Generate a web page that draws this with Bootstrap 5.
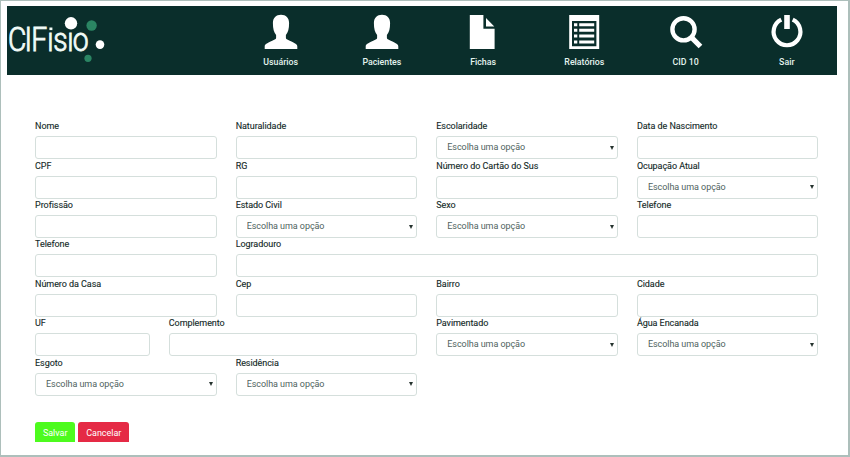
<!DOCTYPE html>
<html lang="pt-BR">
<head>
<meta charset="utf-8">
<meta name="viewport" content="width=device-width, initial-scale=1">
<title>CIFisio</title>
<link href="https://cdn.jsdelivr.net/npm/bootstrap@5.3.0/dist/css/bootstrap.min.css" rel="stylesheet">
<style>
body{font-family:Roboto,"Liberation Sans",sans-serif;font-size:9.3px;line-height:12px;color:#142a28;background:#fff}
.page-frame{height:457px;border:1px solid #adbfbb;border-width:1px 2px 2px 1px;overflow:hidden;padding:5px 11px 0 6px}
.top-bar{height:69px;background:#0a2e2b;padding:0}
.brand-logo{width:100px;height:69px}
.menu-bar{width:607.4px;margin-right:-.4px}
.menu-link{color:#e4f3ee;font-size:8.8px;font-weight:500;line-height:12px;padding:8px 0 0}
.menu-link:hover{color:#fff}
.menu-link svg{width:36px;height:36px;margin-bottom:6px;fill:#fff}
.patient-form{padding:45.3px 9px 0 18.5px}
.patient-form .row{--bs-gutter-x:19.1px;margin-right:0;margin-left:0;height:39.4px}
.patient-form .row>*{padding-left:9.55px;padding-right:9.55px}
.field-label{font-size:9px;line-height:12px;margin:0 0 4px;white-space:nowrap;letter-spacing:-.06px;-webkit-text-stroke:.12px #142a28}
.patient-form .form-control,.patient-form .form-select{height:23px;min-height:0;border:1px solid #d5dfdc;border-radius:3px;padding:0 10px;font-size:9px;line-height:21px;background-image:none;color:#4f6360;letter-spacing:-.06px}
.select-box::after{content:"";position:absolute;right:4px;top:9.5px;border:2.5px solid transparent;border-top:4.5px solid #26332f;border-bottom:0}
.form-buttons{height:20px;overflow:hidden;margin:25.7px 0 0 9.55px;gap:3px}
.form-buttons .btn{height:24px;border:0;border-radius:3px;font-size:9px;line-height:12px;color:#fff;padding:5px 7.9px 7px;letter-spacing:-.03px}
.save-btn,.save-btn:hover{background:#4dfb1e}
.cancel-btn,.cancel-btn:hover{background:#e52a45}
</style>
<script src="https://cdn.jsdelivr.net/npm/bootstrap@5.3.0/dist/js/bootstrap.bundle.min.js"></script>
</head>
<body>
<div class="page-frame">
  <nav class="top-bar navbar d-flex flex-nowrap justify-content-between align-items-start">
    <a href="#" class="d-block" aria-label="CIFisio">
      <svg class="brand-logo d-block" viewBox="0 0 100 69">
        <text transform="scale(.87 1)" x="1.2 20 27.8 46.2 53.2 69.2 75.6" y="45" font-family="Roboto, sans-serif" font-size="32.500" font-weight="300" fill="#f1fbf7" stroke="#f1fbf7" stroke-width=".9">CIFısıo</text>
        <rect x="42.400" y="21.500" width="3" height="2.600" fill="#f1fbf7"/>
        <circle cx="64" cy="17.3" r="6.2" fill="#fff"/>
        <circle cx="84.6" cy="19.5" r="5.2" fill="#2b8563"/>
        <circle cx="93" cy="38.6" r="4.3" fill="#fff"/>
        <circle cx="81" cy="52.3" r="3.6" fill="#2b8563"/>
      </svg>
    </a>
    <div class="menu-bar d-flex">
      <a href="#" class="menu-link flex-fill w-100 d-flex flex-column align-items-center text-decoration-none">
        <svg viewBox="0 0 36 36"><path d="M18 .8c-5 0-8.1 3.2-8.1 8.2 0 5.8 1 9.5 3.2 11.9v3.2c0 1-1.3 1.6-3.3 2.5C5 28.8 1.7 30.2 1.7 32.5V35h32.6v-2.5c0-2.300-3.300-3.700-8.100-5.900-2-.9-3.300-1.500-3.300-2.500v-3.200c2.200-2.400 3.200-6.100 3.200-11.900 0-5-3.100-8.200-8.100-8.200z"/></svg>Usuários</a>
      <a href="#" class="menu-link flex-fill w-100 d-flex flex-column align-items-center text-decoration-none">
        <svg viewBox="0 0 36 36"><path d="M18 .8c-5 0-8.100 3.200-8.100 8.200 0 5.800 1 9.500 3.200 11.900v3.200c0 1-1.300 1.600-3.300 2.500C5 28.800 1.700 30.200 1.700 32.500V35h32.600v-2.500c0-2.300-3.300-3.700-8.100-5.900-2-.9-3.300-1.500-3.300-2.500v-3.200c2.200-2.400 3.200-6.100 3.200-11.900 0-5-3.100-8.200-8.100-8.200z"/></svg>Pacientes</a>
      <a href="#" class="menu-link flex-fill w-100 d-flex flex-column align-items-center text-decoration-none">
        <svg viewBox="0 0 36 36"><path d="M4.800 1h13.600v13.800h11.200V35H4.800zM21 4l8.300 8.500H21z"/></svg>Fichas</a>
      <a href="#" class="menu-link flex-fill w-100 d-flex flex-column align-items-center text-decoration-none">
        <svg viewBox="0 0 36 36"><path fill-rule="evenodd" d="M3.200 1h30v34h-30zM6 7v25.200h24.400V7zM8 9.200h3.300v3H8zm5.200 0h15v3h-15zM8 14.700h3.300v3H8zm5.200 0h15v3h-15zM8 20.500h3.300v3H8zm5.200 0h15v3h-15zM8 26.500h3.300v3H8zm5.200 0h15v3h-15z"/></svg>Relatórios</a>
      <a href="#" class="menu-link flex-fill w-100 d-flex flex-column align-items-center text-decoration-none">
        <svg viewBox="0 0 36 36"><g fill="none" stroke="#fff"><circle cx="15.500" cy="15.300" r="11.100" stroke-width="4.400"/><path stroke-width="5.200" d="m23.200 23.200 9.300 9.300"/></g></svg>CID 10</a>
      <a href="#" class="menu-link flex-fill w-100 d-flex flex-column align-items-center text-decoration-none">
        <svg viewBox="0 0 36 36"><path fill="none" stroke="#fff" stroke-width="4.200" d="M12.300 5.700a13.400 13.400 0 1 0 11.400 0"/><path d="M15.200 1h5.600v14h-5.600z"/></svg>Sair</a>
    </div>
  </nav>

  <form class="patient-form">
    <div class="row">
      <div class="col-3"><label class="field-label d-block" for="nome">Nome</label><input id="nome" class="form-control"></div>
      <div class="col-3"><label class="field-label d-block" for="nat">Naturalidade</label><input id="nat" class="form-control"></div>
      <div class="col-3"><label class="field-label d-block" for="esc">Escolaridade</label><div class="select-box position-relative"><select id="esc" class="form-select"><option>Escolha uma opção</option></select></div></div>
      <div class="col-3"><label class="field-label d-block" for="nasc">Data de Nascimento</label><input id="nasc" class="form-control"></div>
    </div>
    <div class="row">
      <div class="col-3"><label class="field-label d-block" for="cpf">CPF</label><input id="cpf" class="form-control"></div>
      <div class="col-3"><label class="field-label d-block" for="rg">RG</label><input id="rg" class="form-control"></div>
      <div class="col-3"><label class="field-label d-block" for="sus">Número do Cartão do Sus</label><input id="sus" class="form-control"></div>
      <div class="col-3"><label class="field-label d-block" for="ocup">Ocupação Atual</label><div class="select-box position-relative"><select id="ocup" class="form-select"><option>Escolha uma opção</option></select></div></div>
    </div>
    <div class="row">
      <div class="col-3"><label class="field-label d-block" for="prof">Profissão</label><input id="prof" class="form-control"></div>
      <div class="col-3"><label class="field-label d-block" for="civil">Estado Civil</label><div class="select-box position-relative"><select id="civil" class="form-select"><option>Escolha uma opção</option></select></div></div>
      <div class="col-3"><label class="field-label d-block" for="sexo">Sexo</label><div class="select-box position-relative"><select id="sexo" class="form-select"><option>Escolha uma opção</option></select></div></div>
      <div class="col-3"><label class="field-label d-block" for="tel1">Telefone</label><input id="tel1" class="form-control"></div>
    </div>
    <div class="row">
      <div class="col-3"><label class="field-label d-block" for="tel2">Telefone</label><input id="tel2" class="form-control"></div>
      <div class="col-9"><label class="field-label d-block" for="log">Logradouro</label><input id="log" class="form-control"></div>
    </div>
    <div class="row">
      <div class="col-3"><label class="field-label d-block" for="num">Número da Casa</label><input id="num" class="form-control"></div>
      <div class="col-3"><label class="field-label d-block" for="cep">Cep</label><input id="cep" class="form-control"></div>
      <div class="col-3"><label class="field-label d-block" for="bairro">Bairro</label><input id="bairro" class="form-control"></div>
      <div class="col-3"><label class="field-label d-block" for="cidade">Cidade</label><input id="cidade" class="form-control"></div>
    </div>
    <div class="row">
      <div class="col-2"><label class="field-label d-block" for="uf">UF</label><input id="uf" class="form-control"></div>
      <div class="col-4"><label class="field-label d-block" for="comp">Complemento</label><input id="comp" class="form-control"></div>
      <div class="col-3"><label class="field-label d-block" for="pav">Pavimentado</label><div class="select-box position-relative"><select id="pav" class="form-select"><option>Escolha uma opção</option></select></div></div>
      <div class="col-3"><label class="field-label d-block" for="agua">Água Encanada</label><div class="select-box position-relative"><select id="agua" class="form-select"><option>Escolha uma opção</option></select></div></div>
    </div>
    <div class="row">
      <div class="col-3"><label class="field-label d-block" for="esg">Esgoto</label><div class="select-box position-relative"><select id="esg" class="form-select"><option>Escolha uma opção</option></select></div></div>
      <div class="col-3"><label class="field-label d-block" for="res">Residência</label><div class="select-box position-relative"><select id="res" class="form-select"><option>Escolha uma opção</option></select></div></div>
    </div>
    <div class="form-buttons d-flex align-items-start">
      <button type="button" class="btn save-btn">Salvar</button>
      <button type="button" class="btn cancel-btn">Cancelar</button>
    </div>
  </form>
</div>
</body>
</html>
